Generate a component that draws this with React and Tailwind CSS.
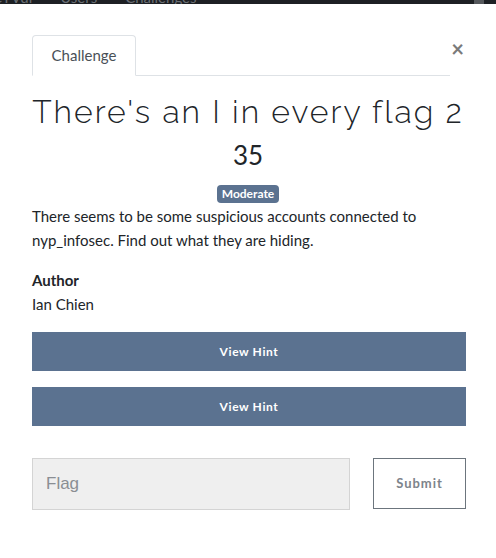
import React from "react";

export default function App() {
  return (
    <div className="w-[496px] h-[558px] bg-white overflow-hidden relative" style={{ fontFamily: "Lato, 'Noto Sans', sans-serif" }}>
      {/* top dark strip (page behind modal) */}
      <div className="h-[4px] bg-[#1d2024] overflow-hidden flex items-end">
        <div className="flex gap-[28px] text-[15px] leading-[15px] text-[#6b6f74] ml-[-8px] mb-[-1px]">
          <span>CTVul</span>
          <span>Users</span>
          <span>Challenges</span>
        </div>
        <div className="ml-auto mr-[12px] w-[10px] h-[4px] bg-[#55585c]" />
      </div>

      <div className="px-[32px] pt-[31px]">
        {/* tabs header */}
        <div className="flex items-start">
          <div className="flex-1 flex border-b border-[#dee2e6]">
            <div className="h-[41px] w-[104px] border border-[#dee2e6] border-b-white mb-[-1px] rounded-t-[4px] flex items-center justify-center text-[15px] text-[#495057] bg-white">
              Challenge
            </div>
          </div>
          <button className="mt-[3px] text-[22px] leading-[22px] text-[#7a7a7a] font-bold w-[14px] flex justify-end">×</button>
        </div>

        {/* title */}
        <h1 className="mt-[16px] text-center text-[32px] leading-[40px] font-light text-[#212529] tracking-[2px] whitespace-nowrap" style={{ fontFamily: "Raleway, Lato, sans-serif" }}>
          There's an I in every flag 2
        </h1>
        <div className="mt-[7px] text-center text-[26px] leading-[32px] text-[#212529]">35</div>
        <div className="flex justify-center mt-[14px]">
          <span className="h-[18px] px-[5px] rounded-[4px] bg-[#5b7290] text-white text-[12px] font-bold leading-[18px]">Moderate</span>
        </div>

        {/* description */}
        <p className="mt-[1px] text-[15px] leading-[24px] text-[#212529]">
          There seems to be some suspicious accounts connected to nyp_infosec. Find out what they are hiding.
        </p>

        <div className="mt-[16px] text-[15px] leading-[24px] font-bold text-[#212529]">Author</div>
        <div className="text-[15px] leading-[24px] text-[#212529]">Ian Chien</div>

        {/* hints */}
        <div className="mt-[16px] w-[434px] flex flex-col gap-[16px]">
          <button className="h-[39px] w-full bg-[#5b7290] text-white text-[12px] font-bold tracking-[0.6px]">View Hint</button>
          <button className="h-[39px] w-full bg-[#5b7290] text-white text-[12px] font-bold tracking-[0.6px]">View Hint</button>
        </div>

        {/* flag form */}
        <div className="mt-[32px] w-[434px] flex items-start justify-between">
          <div className="w-[318px] h-[52px] bg-[#efefef] border border-[#d4d4d4] flex items-center pl-[13px] text-[17px] text-[#8a8e93]" style={{ fontFamily: "'Liberation Sans', Arial, sans-serif" }}>
            Flag
          </div>
          <button className="w-[93px] h-[51px] border border-[#6c757d] bg-white text-[13px] font-bold text-[#7d848b] tracking-[1px]">
            Submit
          </button>
        </div>
      </div>
    </div>
  );
}
